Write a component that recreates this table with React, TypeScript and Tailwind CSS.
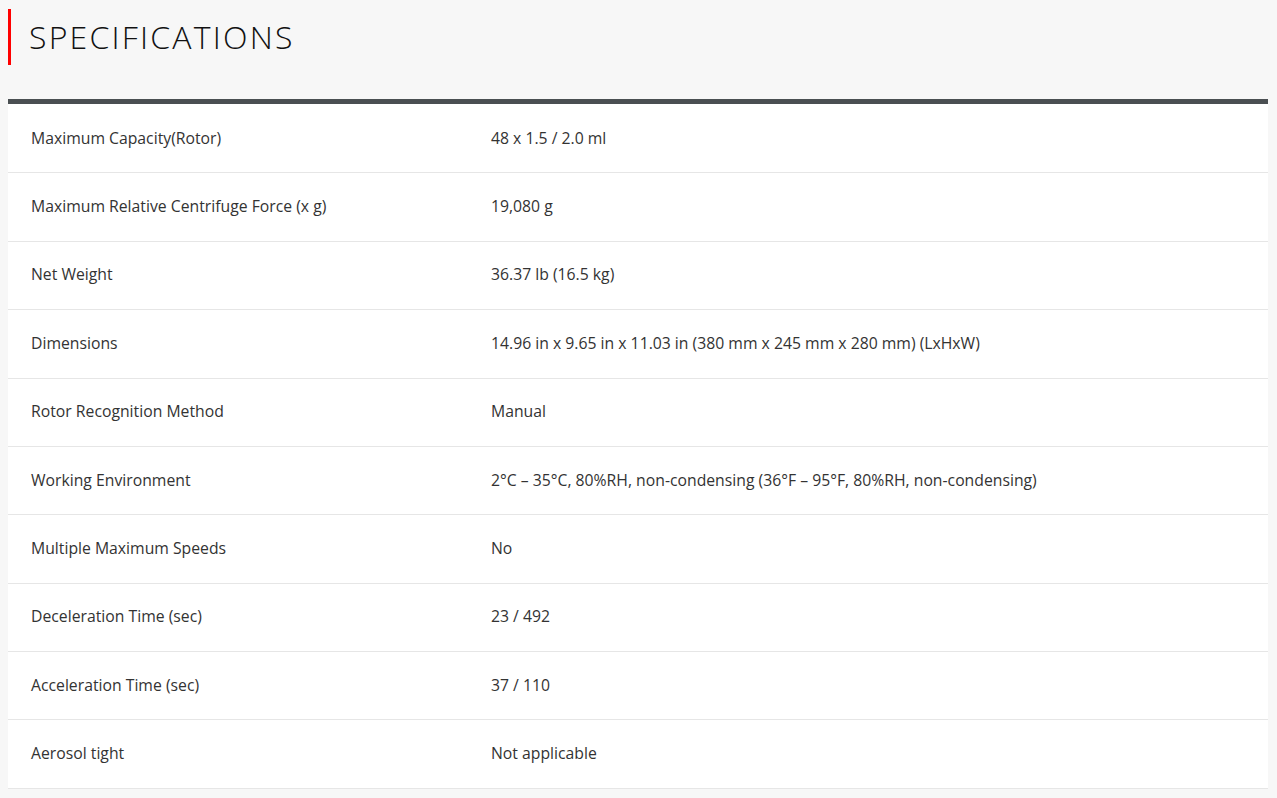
const rows: [string, string][] = [
  ["Maximum Capacity(Rotor)", "48 x 1.5 / 2.0 ml"],
  ["Maximum Relative Centrifuge Force (x g)", "19,080 g"],
  ["Net Weight", "36.37 lb (16.5 kg)"],
  ["Dimensions", "14.96 in x 9.65 in x 11.03 in (380 mm x 245 mm x 280 mm) (LxHxW)"],
  ["Rotor Recognition Method", "Manual"],
  ["Working Environment", "2°C – 35°C, 80%RH, non-condensing (36°F – 95°F, 80%RH, non-condensing)"],
  ["Multiple Maximum Speeds", "No"],
  ["Deceleration Time (sec)", "23 / 492"],
  ["Acceleration Time (sec)", "37 / 110"],
  ["Aerosol tight", "Not applicable"],
];

export default function App() {
  return (
    <div className="min-h-[798px] bg-[#f7f7f7] pl-2 pr-[9px] pt-[9px]">
      <div className="flex h-[56px] items-center border-l-[3px] border-[#ff0000] pl-[18px]">
        <h2 className="font-['Open_Sans',sans-serif] text-[32px] font-light leading-none tracking-[2.2px] text-[#111]">
          SPECIFICATIONS
        </h2>
      </div>

      <div className="mt-[34px] border-t-[5px] border-[#4a4f52] bg-white pt-[1px] font-['Open_Sans',sans-serif] text-[15.75px] leading-[24px] text-[#333]">
        {rows.map(([label, value]) => (
          <div key={label} className="flex border-b border-[#e6e6e6] pb-[22.7px] pt-[20.7px]">
            <div className="w-[483px] shrink-0 pl-[23px]">{label}</div>
            <div>{value}</div>
          </div>
        ))}
      </div>
    </div>
  );
}
